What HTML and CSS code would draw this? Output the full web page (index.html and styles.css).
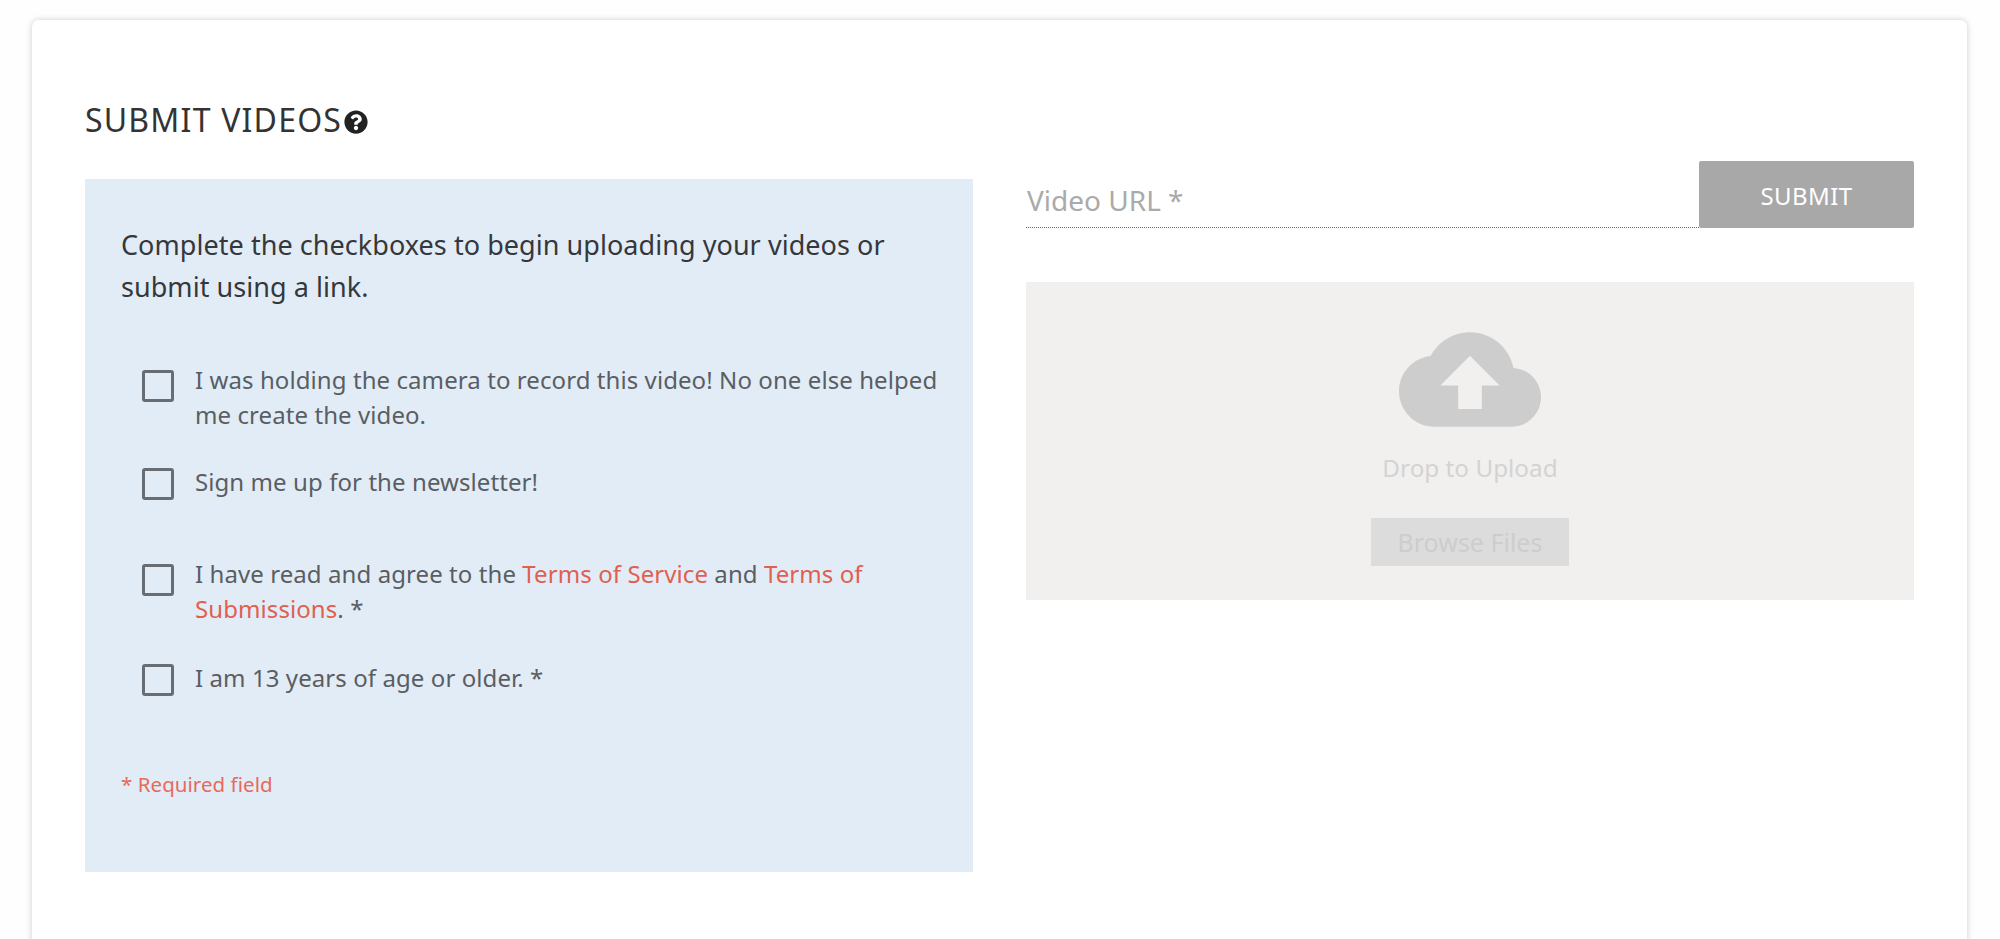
FILE: index.html
```html
<!DOCTYPE html>
<html lang="en">
<head>
    <meta charset="UTF-8">
    <meta name="viewport" content="width=device-width, initial-scale=1.0">
    <title>Submit Videos</title>
    <link rel="stylesheet" href="styles.css">
</head>
<body>
    <main class="card">
        <h1 class="card-title">
            SUBMIT VIDEOS
            <svg class="help-icon" viewBox="0 0 512 512" aria-hidden="true">
                <path d="M504 256c0 136.997-111.043 248-248 248S8 392.997 8 256C8 119.083 119.043 8 256 8s248 111.083 248 248zM262.655 90c-54.497 0-89.255 22.957-116.549 63.758-3.536 5.286-2.353 12.415 2.715 16.258l34.699 26.31c5.205 3.947 12.621 3.008 16.665-2.122 17.864-22.658 30.113-35.797 57.303-35.797 20.429 0 45.698 13.148 45.698 32.958 0 14.976-12.363 22.667-32.534 33.976C247.128 238.528 216 254.941 216 296v4c0 6.627 5.373 12 12 12h56c6.627 0 12-5.373 12-12v-1.333c0-28.462 83.186-29.647 83.186-106.667 0-58.002-60.165-102-116.531-102zM256 338c-25.365 0-46 20.635-46 46 0 25.364 20.635 46 46 46s46-20.636 46-46c0-25.365-20.635-46-46-46z"/>
            </svg>
        </h1>

        <div class="columns">
            <!-- Checkboxes -->
            <section class="consent-panel">
                <p class="intro">Complete the checkboxes to begin uploading your videos or submit using a link.</p>

                <label class="check-row check-row-first">
                    <input type="checkbox" class="check-box">
                    <span>I was holding the camera to record this video! No one else helped me create the video.</span>
                </label>
                <label class="check-row check-row-single check-row-wide">
                    <input type="checkbox" class="check-box">
                    <span>Sign me up for the newsletter!</span>
                </label>
                <label class="check-row">
                    <input type="checkbox" class="check-box">
                    <span>I have read and agree to the <a href="#">Terms of Service</a> and <a href="#">Terms of Submissions</a>. *</span>
                </label>
                <label class="check-row check-row-single">
                    <input type="checkbox" class="check-box">
                    <span>I am 13 years of age or older. *</span>
                </label>

                <p class="required-note">* Required field</p>
            </section>

            <!-- Upload -->
            <section class="upload-column">
                <form class="url-form">
                    <input type="text" class="url-input" placeholder="Video URL *">
                    <button type="button" class="url-submit">SUBMIT</button>
                </form>

                <div class="drop-zone">
                    <svg class="cloud-icon" viewBox="0 4 24 16" aria-hidden="true">
                        <path d="M19.35 10.04C18.67 6.59 15.64 4 12 4 9.11 4 6.6 5.64 5.35 8.04 2.34 8.36 0 10.91 0 14c0 3.31 2.69 6 6 6h13c2.76 0 5-2.24 5-5 0-2.64-2.05-4.78-4.65-4.96zM14 13v4h-4v-4H7l5-5 5 5h-3z"/>
                    </svg>
                    <div class="drop-label">Drop to Upload</div>
                    <button type="button" class="browse-btn">Browse Files</button>
                </div>
            </section>
        </div>
    </main>
</body>
</html>
```

FILE: styles.css
```css
* {
    margin: 0;
    padding: 0;
    box-sizing: border-box;
}

html, body {
    height: 100%;
    overflow: hidden;
}

body {
    font-family: "Noto Sans", Arial, sans-serif;
    background: #fefefe;
    padding: 20px 33px 0 32px;
}

/* Card */
.card {
    height: 1000px;
    padding: 79px 53px 0;
    background: white;
    border-radius: 7px;
    box-shadow: 0 0 6px rgba(0,0,0,0.2);
}

.card-title {
    display: flex;
    align-items: center;
    gap: 2px;
    height: 42px;
    margin-bottom: 38px;
    font-size: 32px;
    font-weight: 400;
    letter-spacing: 1.2px;
    line-height: 42px;
    color: #333;
}

.help-icon {
    width: 24px;
    height: 24px;
    margin-top: 3px;
    fill: #222;
}

.columns {
    display: grid;
    grid-template-columns: 888px 888px;
    gap: 53px;
}

/* Left panel */
.consent-panel {
    height: 693px;
    padding: 45px 36px 0;
    background: #e2ecf7;
}

.intro {
    margin-bottom: 54px;
    font-size: 27px;
    letter-spacing: 0.05px;
    line-height: 42px;
    color: #35383b;
}

.check-row {
    display: flex;
    gap: 21px;
    margin-right: -12px;
    margin-bottom: 34px;
    padding-left: 21px;
    font-size: 24px;
    letter-spacing: 0.08px;
    line-height: 35px;
    color: #5a5e62;
}

.check-row-first {
    margin-bottom: 32px;
}

.check-row-wide {
    margin-bottom: 56px;
}

.check-row a {
    color: #e0604f;
    text-decoration: none;
}

.check-box {
    appearance: none;
    flex: none;
    width: 32px;
    height: 32px;
    margin-top: 8px;
    border: 3px solid #676d73;
    border-radius: 3px;
    background: transparent;
}

.check-row-single .check-box {
    margin-top: 4px;
}

.required-note {
    margin-top: 73px;
    font-size: 20.5px;
    letter-spacing: 0.05px;
    line-height: 30px;
    color: #e8695a;
}

/* Right column */
.upload-column {
    display: flex;
    flex-direction: column;
    gap: 54px;
    margin-top: -18px;
}

.url-form {
    display: flex;
    height: 67px;
}

.url-input {
    flex: 1;
    min-width: 0;
    padding: 12px 0 0 1px;
    border: none;
    border-bottom: 1px dotted #666;
    outline: none;
    background: transparent;
    font-family: inherit;
    font-size: 28px;
}

.url-input::placeholder {
    color: #aaa;
    opacity: 1;
}

.url-submit {
    flex: none;
    width: 215px;
    padding-top: 2px;
    border: none;
    border-radius: 2px;
    background: #a8a8a8;
    color: white;
    font-family: inherit;
    font-size: 24px;
    letter-spacing: 0.4px;
}

.drop-zone {
    display: flex;
    flex-direction: column;
    align-items: center;
    height: 318px;
    padding-top: 50px;
    background: #f1f0ee;
}

.cloud-icon {
    width: 142px;
    height: 95px;
    fill: #cdcdcd;
}

.drop-label {
    margin-top: 24px;
    font-size: 24.3px;
    line-height: 34px;
    color: #d3d3d3;
}

.browse-btn {
    width: 198px;
    height: 48px;
    margin-top: 33px;
    border: none;
    background: #dcdcdc;
    color: #cdcdcd;
    font-family: inherit;
    font-size: 25px;
}
```
